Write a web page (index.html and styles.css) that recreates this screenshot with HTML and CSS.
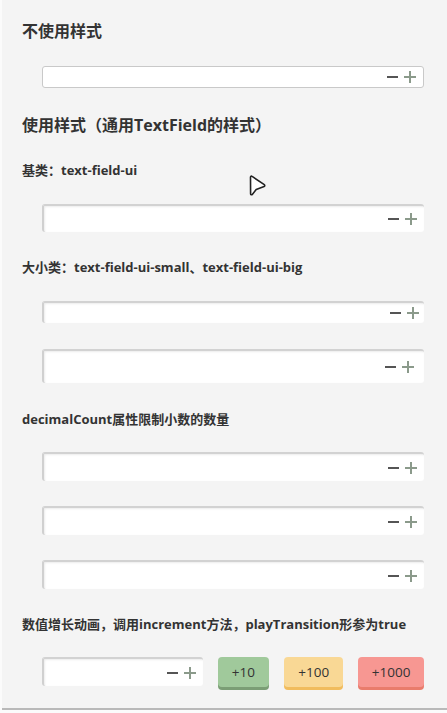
FILE: index.html
```html
<!DOCTYPE html>
<html lang="zh-CN">
<head>
<meta charset="utf-8">
<title>TextField</title>
<link rel="stylesheet" href="styles.css">
</head>
<body>
<div class="page">
  <h2 class="title">不使用样式</h2>
  <div class="field plain shift-m1">
    <svg class="step" viewBox="0 0 30 14" width="30" height="14"><line class="minus" x1="0" y1="7" x2="11" y2="7"/><line class="plus" x1="17" y1="7" x2="29" y2="7"/><line class="plus" x1="23" y1="1" x2="23" y2="13"/></svg>
  </div>
  <h2 class="title shift-p1">使用样式（通用TextField的样式）</h2>
  <div class="label">基类：text-field-ui</div>
  <div class="field ui">
    <svg class="step" viewBox="0 0 30 14" width="30" height="14"><line class="minus" x1="0" y1="7" x2="11" y2="7"/><line class="plus" x1="17" y1="7" x2="29" y2="7"/><line class="plus" x1="23" y1="1" x2="23" y2="13"/></svg>
  </div>
  <div class="label shift-p1">大小类：text-field-ui-small、text-field-ui-big</div>
  <div class="field ui small">
    <svg class="step" viewBox="0 0 30 14" width="30" height="14"><line class="minus" x1="0" y1="7" x2="11" y2="7"/><line class="plus" x1="17" y1="7" x2="29" y2="7"/><line class="plus" x1="23" y1="1" x2="23" y2="13"/></svg>
  </div>
  <div class="field ui big shift-p1">
    <svg class="step" viewBox="0 0 30 14" width="30" height="14"><line class="minus" x1="0" y1="7" x2="11" y2="7"/><line class="plus" x1="17" y1="7" x2="29" y2="7"/><line class="plus" x1="23" y1="1" x2="23" y2="13"/></svg>
  </div>
  <div class="label shift-p2">decimalCount属性限制小数的数量</div>
  <div class="field ui mid shift-m1">
    <svg class="step" viewBox="0 0 30 14" width="30" height="14"><line class="minus" x1="0" y1="7" x2="11" y2="7"/><line class="plus" x1="17" y1="7" x2="29" y2="7"/><line class="plus" x1="23" y1="1" x2="23" y2="13"/></svg>
  </div>
  <div class="field ui mid">
    <svg class="step" viewBox="0 0 30 14" width="30" height="14"><line class="minus" x1="0" y1="7" x2="11" y2="7"/><line class="plus" x1="17" y1="7" x2="29" y2="7"/><line class="plus" x1="23" y1="1" x2="23" y2="13"/></svg>
  </div>
  <div class="field ui mid">
    <svg class="step" viewBox="0 0 30 14" width="30" height="14"><line class="minus" x1="0" y1="7" x2="11" y2="7"/><line class="plus" x1="17" y1="7" x2="29" y2="7"/><line class="plus" x1="23" y1="1" x2="23" y2="13"/></svg>
  </div>
  <div class="label shift-p1">数值增长动画，调用increment方法，playTransition形参为true</div>
  <div class="row shift-m1">
    <div class="field ui mid short">
      <svg class="step" viewBox="0 0 30 14" width="30" height="14"><line class="minus" x1="0" y1="7" x2="11" y2="7"/><line class="plus" x1="17" y1="7" x2="29" y2="7"/><line class="plus" x1="23" y1="1" x2="23" y2="13"/></svg>
    </div>
    <button class="btn green">+10</button>
    <button class="btn yellow">+100</button>
    <button class="btn red">+1000</button>
  </div>
  <svg class="cursor" viewBox="0 0 18 21" width="18" height="21"><path d="M2.5 2.2 C2.5 1.3 3.4 0.9 4.1 1.4 L16.3 9.6 C17 10.1 16.9 11.1 16.1 11.4 L8.2 14.4 L4.3 19.4 C3.7 20.1 2.6 19.8 2.6 18.9 Z" fill="#fff" stroke="#222" stroke-width="1.6" stroke-linejoin="round"/></svg>
</div>
</body>
</html>
```

FILE: styles.css
```css
html, body {
  margin: 0;
  padding: 0;
  background: #fbfbfb;
}

.page {
  position: relative;
  margin-left: 2px;
  height: 710px;
  box-sizing: border-box;
  background: #f4f4f4;
  border-bottom: 2px solid #b9b9b9;
  padding: 20px 23px 0 20px;
  display: flex;
  flex-direction: column;
  gap: 25px;
  font-family: "Open Sans", "Noto Sans CJK SC", sans-serif;
  color: #333;
}

.title {
  margin: 0;
  font-size: 16px;
  line-height: 22px;
  font-weight: bold;
}

.label {
  font-size: 13px;
  line-height: 18px;
  font-weight: bold;
}

.shift-m1 { margin-top: -1px; }
.shift-p1 { margin-top: 1px; }
.shift-p2 { margin-top: 2px; }

.field {
  margin-left: 20px;
  height: 22px;
  box-sizing: border-box;
  background: #fff;
  border-radius: 3px;
  display: flex;
  align-items: center;
  justify-content: flex-end;
  padding-right: 6px;
}

.field.plain {
  border: 1px solid #c9c9c9;
}

.field.ui {
  height: 28px;
  border-top: 2px solid #d2d2d2;
  border-left: 2px solid #d0d0d0;
  box-shadow: inset 1px 1px 2px rgba(0, 0, 0, 0.08);
}

.field.ui.small {
  height: 22px;
  padding-right: 4px;
}

.field.ui.big {
  height: 34px;
  padding-right: 9px;
}

.field.ui.mid {
  height: 29px;
}

.step {
  display: block;
}

.step line {
  stroke-width: 2;
}

.step .minus {
  stroke: #555;
}

.step .plus {
  stroke: #8b9a8b;
}

.row {
  display: flex;
  align-items: flex-start;
  gap: 15px;
}

.field.short {
  width: 161px;
  margin-left: 20px;
  margin-right: 0;
}

.btn {
  height: 30px;
  border: none;
  border-radius: 4px;
  font-family: "Open Sans", "Noto Sans CJK SC", sans-serif;
  font-size: 13.5px;
  color: #333;
  padding: 0;
}

.btn.green {
  width: 52px;
  background: #a0c99b;
  box-shadow: 0 3px 0 #7b9e75;
}

.btn.yellow {
  width: 59px;
  background: #f9d895;
  box-shadow: 0 3px 0 #f1bc5d;
}

.btn.red {
  width: 66px;
  background: #f79792;
  box-shadow: 0 3px 0 #e97c6c;
}

.cursor {
  position: absolute;
  left: 246px;
  top: 175px;
}
```
